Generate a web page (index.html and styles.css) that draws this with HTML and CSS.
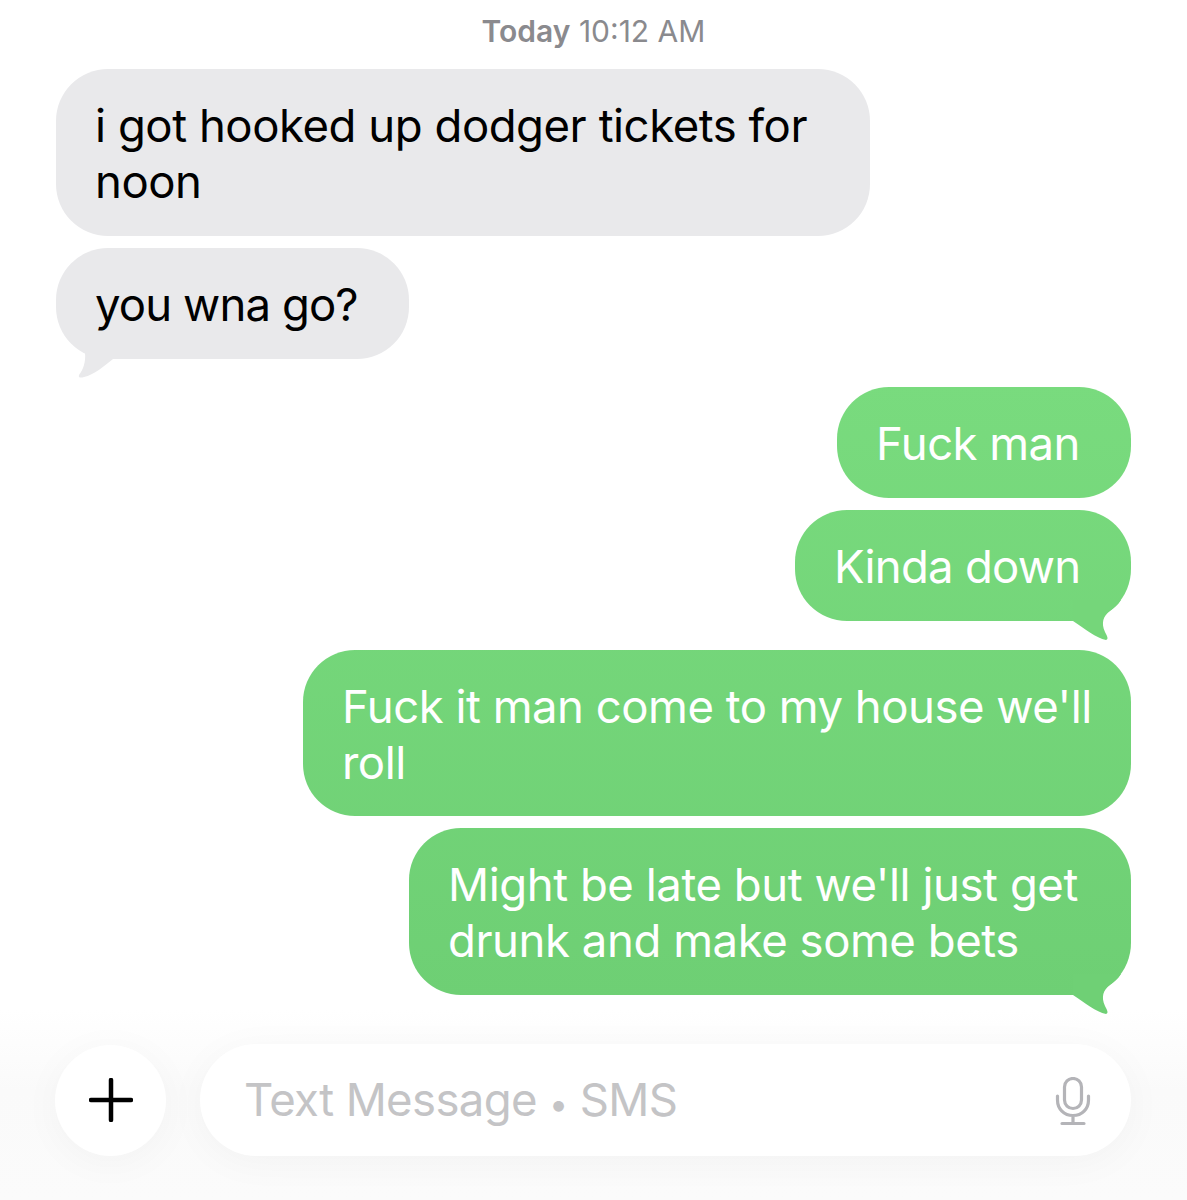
FILE: index.html
```html
<!DOCTYPE html>
<html lang="en">
<head>
<meta charset="utf-8">
<title>Messages</title>
<link rel="stylesheet" href="styles.css">
</head>
<body>
<main class="screen">
  <p class="stamp"><strong>Today</strong> 10:12 AM</p>
  <section class="thread">
    <div class="bubble in first">i got hooked up dodger tickets for noon</div>
    <div class="bubble in tailed go">you wna go?
      <svg class="tail tail-in" viewBox="0 0 60 50" width="60" height="50" aria-hidden="true"><path d="M4 5C8 14 13 20 19 23C20 32 17 40 13 45C12 48 15 48 18 47C28 45 38 36 47 29L47 5Z"/></svg>
    </div>
    <div class="bubble out gap-top man">Fuck man</div>
    <div class="bubble out tailed kinda">Kinda down
      <svg class="tail tail-out" viewBox="0 0 75 55" width="75" height="55" aria-hidden="true"><path d="M61 10C58 15 54 18 50 21C43 26 41 33 45 42C47 46 49 49 46 50C36 48 25 39 13 31L13 10Z"/></svg>
    </div>
    <div class="bubble out wide">Fuck it man come to my house we'll roll</div>
    <div class="bubble out tailed medium">Might be late but we'll just get drunk and make some bets
      <svg class="tail tail-out tail-low" viewBox="0 0 75 55" width="75" height="55" aria-hidden="true"><path d="M61 10C58 15 54 18 50 21C43 26 41 33 45 42C47 46 49 49 46 50C36 48 25 39 13 31L13 10Z"/></svg>
    </div>
  </section>
  <footer class="composer">
    <div class="add">
      <svg viewBox="0 0 44 44" width="44" height="44" aria-hidden="true"><path d="M22 2V42M2 22H42"/></svg>
    </div>
    <div class="field">
      <span class="placeholder">Text Message <span class="dot">•</span> SMS</span>
      <svg class="mic" viewBox="0 0 36 50" width="36" height="50" aria-hidden="true"><rect x="9.500" y="1.500" width="17" height="30" rx="8.500"/><path d="M2.500 19V23C2.500 32 9 38.500 18 38.500C27 38.500 33.500 32 33.500 23V19M18 38.500V46.500M7 46.500H29"/></svg>
    </div>
  </footer>
</main>
</body>
</html>
```
FILE: styles.css
```css
* { box-sizing: border-box; }
html, body { margin: 0; padding: 0; background: #fff; }
body { font-family: Inter, "Liberation Sans", sans-serif; }
.screen {
  width: 1187px;
  height: 1200px;
  display: flex;
  flex-direction: column;
  overflow: hidden;
  background: linear-gradient(#fff 0, #fff 1010px, #fafafa 1090px, #fbfbfb 1200px);
}
.stamp {
  margin: 0;
  padding-top: 14px;
  height: 69px;
  text-align: center;
  font-size: 30px;
  line-height: 34px;
  color: #8a8a8e;
}
.stamp strong { font-weight: 600; }
.thread {
  display: flex;
  flex-direction: column;
  gap: 12px;
  padding: 0 56px;
  height: 975px;
}
.bubble {
  position: relative;
  padding: 29px 39px 26px;
  border-radius: 52px;
  font-size: 45.5px;
  line-height: 56px;
  letter-spacing: -0.55px;
}
.in { align-self: flex-start; background: #e9e9eb; color: #000; }
.out {
  align-self: flex-end;
  color: #fff;
  background: linear-gradient(#79db7e 380px, #6ecf74 1000px) fixed;
}
.first { width: 814px; letter-spacing: -0.46px; }
.go { width: 353px; letter-spacing: -0.9px; }
.man { width: 294px; }
.kinda { width: 336px; letter-spacing: -0.75px; }
.gap-top { margin-top: 16px; }
.wide { width: 828px; height: 166px; margin-top: 17px; letter-spacing: -0.5px; }
.medium { width: 722px; letter-spacing: -0.45px; }
.tail { position: absolute; display: block; }
.tail-in { left: 10px; bottom: -21px; fill: #e9e9eb; }
.tail-out { right: -4px; bottom: -24px; fill: #75d67a; }
.tail-low { fill: #6fd075; }
.composer {
  display: flex;
  align-items: center;
  gap: 34px;
  padding: 0 56px 0 55px;
  height: 112px;
}
.add {
  width: 111px;
  height: 111px;
  flex: none;
  display: flex;
  align-items: center;
  justify-content: center;
  border-radius: 50%;
  background: #fff;
  box-shadow: 0 6px 40px rgba(0, 0, 0, .035);
}
.add svg { fill: none; stroke: #000; stroke-width: 4.500px; stroke-linecap: round; }
.field {
  flex: 1;
  height: 112px;
  display: flex;
  align-items: center;
  justify-content: space-between;
  padding: 0 40px 0 44px;
  border-radius: 56px;
  background: #fff;
  box-shadow: 0 6px 40px rgba(0, 0, 0, .035);
}
.placeholder {
  padding-bottom: 2px;
  font-size: 45.5px;
  letter-spacing: -0.62px;
  color: #c4c4c6;
}
.dot { font-size: 34px; }
.mic { fill: none; stroke: #b4b4b8; stroke-width: 3.2px; stroke-linecap: round; margin-top: 3px; }
```
